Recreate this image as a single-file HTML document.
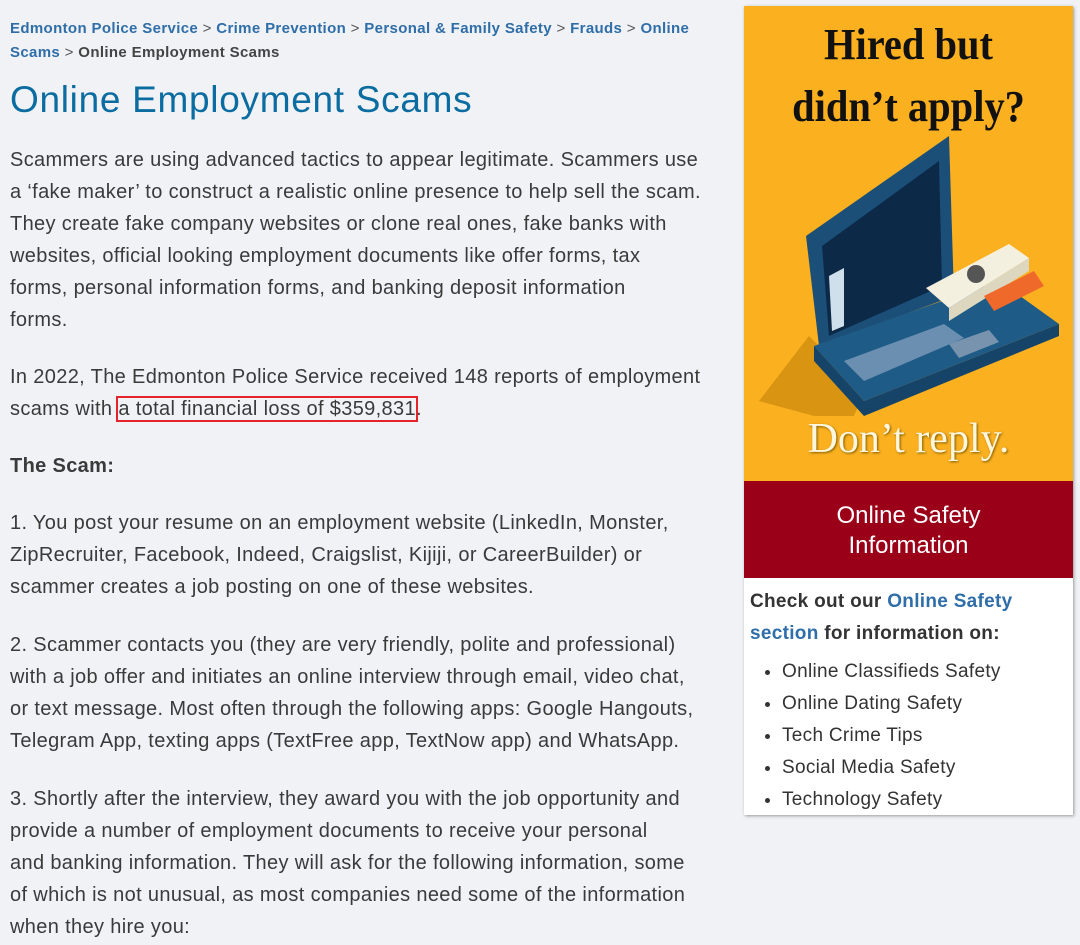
<!DOCTYPE html>
<html><head><meta charset="utf-8"><style>
body{margin:0;background:#f0f2f6;width:1080px;height:945px;overflow:hidden;font-family:"Liberation Sans",sans-serif;color:#333;}
.bc{position:absolute;top:17px;left:10px;font-size:15px;line-height:24px;font-weight:bold;color:#444;white-space:nowrap;letter-spacing:0.35px}
.bc a{color:#2f6ea8;text-decoration:none}
.bc span{font-weight:normal;color:#555}
h1{position:absolute;left:10px;top:78px;margin:0;font-weight:normal;font-size:37px;color:#0a6ca0;white-space:nowrap;line-height:44px;letter-spacing:0.7px}
.t{position:absolute;left:10px;font-size:20px;line-height:32px;white-space:nowrap;color:#3a3a3a;letter-spacing:0.35px}
.hl{outline:2px solid #e3242b;outline-offset:0}
.side{position:absolute;left:744px;top:6px;width:329px;height:809px;background:#fff;box-shadow:1px 1px 3px #999}
.img{position:absolute;left:0;top:0;width:329px;height:475px;background:#fbb020;overflow:hidden}
.red{position:absolute;left:0;top:475px;width:329px;height:97px;background:#9b0019;color:#fff;text-align:center;font-size:24px;line-height:30px;box-sizing:border-box;padding-top:20px}
.sb{position:absolute;top:586px;font-size:19px;line-height:32px;font-weight:bold;color:#333;white-space:nowrap;letter-spacing:0.3px}
.sb a{color:#2f6ea8}
ul{position:absolute;top:656px;margin:0;padding-left:26px;font-size:19px;line-height:32px;color:#333;white-space:nowrap;letter-spacing:0.3px}
.ser{font-family:"Liberation Serif",serif;position:absolute;width:329px;text-align:center}
</style></head><body>
<div class="bc"><a>Edmonton Police Service</a> <span>&gt;</span> <a>Crime Prevention</a> <span>&gt;</span> <a>Personal &amp; Family Safety</a> <span>&gt;</span> <a>Frauds</a> <span>&gt;</span> <a>Online</a><br><a>Scams</a> <span>&gt;</span> Online Employment Scams</div>
<h1>Online Employment Scams</h1>
<div class="t" style="top:144px">Scammers are using advanced tactics to appear legitimate. Scammers use<br>a ‘fake maker’ to construct a realistic online presence to help sell the scam.<br>They create fake company websites or clone real ones, fake banks with<br>websites, official looking employment documents like offer forms, tax<br>forms, personal information forms, and banking deposit information<br>forms.</div>
<div class="t" style="top:361px">In 2022, The Edmonton Police Service received 148 reports of employment<br>scams with <span class="hl">a total financial loss of $359,831</span>.</div>
<div class="t" style="top:450px;font-weight:bold">The Scam:</div>
<div class="t" style="top:507px">1. You post your resume on an employment website (LinkedIn, Monster,<br>ZipRecruiter, Facebook, Indeed, Craigslist, Kijiji, or CareerBuilder) or<br>scammer creates a job posting on one of these websites.</div>
<div class="t" style="top:629px">2. Scammer contacts you (they are very friendly, polite and professional)<br>with a job offer and initiates an online interview through email, video chat,<br>or text message. Most often through the following apps: Google Hangouts,<br>Telegram App, texting apps (TextFree app, TextNow app) and WhatsApp.</div>
<div class="t" style="top:783px">3. Shortly after the interview, they award you with the job opportunity and<br>provide a number of employment documents to receive your personal<br>and banking information. They will ask for the following information, some<br>of which is not unusual, as most companies need some of the information<br>when they hire you:</div>
<div class="side">
<div class="img">
<div class="ser" style="top:8px;font-size:44px;line-height:62px;color:#111;font-weight:bold;transform:scaleX(0.92)">Hired but<br>didn’t apply?</div>
<svg width="329" height="475" style="position:absolute;left:0;top:0">
<polygon points="15,395 65,330 120,385 110,410 70,410" fill="#d99412"/>
<polygon points="62,230 205,130 210,290 75,340" fill="#1b4f78"/>
<polygon points="78,240 195,155 198,280 85,330" fill="#0c2a48"/>
<polygon points="85,270 100,262 100,320 88,325" fill="#cfe0ec"/>
<polygon points="70,340 255,275 315,318 120,395" fill="#1e5c87"/>
<polygon points="120,395 315,318 315,330 120,410" fill="#164468"/>
<polygon points="70,340 120,395 120,410 70,355" fill="#164468"/>
<polygon points="100,355 200,318 220,332 120,375" fill="#6a8fb0"/>
<polygon points="205,338 245,324 255,336 215,352" fill="#7893ad"/>
<polygon points="182,282 265,238 285,252 205,302" fill="#f3f0e0"/>
<polygon points="205,302 285,252 285,265 205,315" fill="#ddd7bf"/>
<circle cx="232" cy="268" r="9" fill="#555"/>
<polygon points="240,290 290,265 300,280 250,305" fill="#ef6a2a"/>
</svg>
<div class="ser" style="top:408px;font-size:42px;line-height:50px;color:#fff6dc;text-shadow:1px 1px 2px #7a5a00">Don’t reply.</div>
</div>
<div class="red">Online Safety<br>Information</div>
</div>
<div class="sb" style="left:750px">Check out our <a>Online Safety</a><br><a>section</a> for information on:</div>
<ul style="left:756px">
<li>Online Classifieds Safety</li><li>Online Dating Safety</li><li>Tech Crime Tips</li><li>Social Media Safety</li><li>Technology Safety</li></ul>
</body></html>
